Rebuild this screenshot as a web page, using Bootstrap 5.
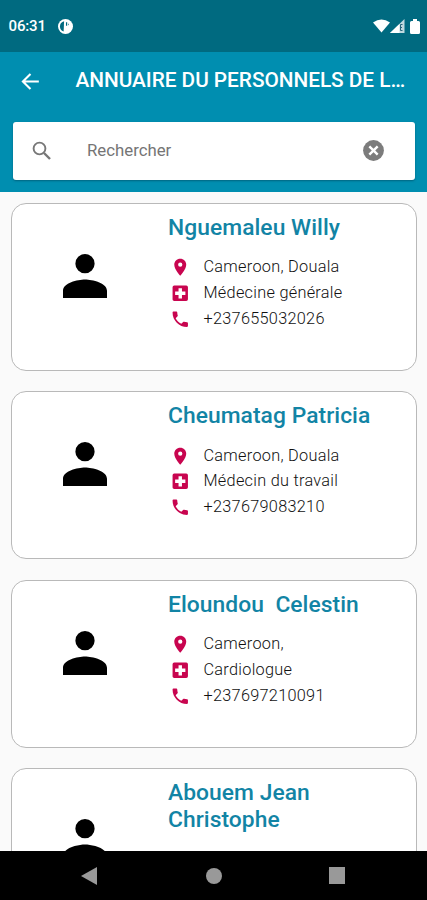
<!DOCTYPE html>
<html lang="fr">
<head>
<meta charset="utf-8">
<meta name="viewport" content="width=device-width, initial-scale=1">
<title>Annuaire du personnel</title>
<link href="https://cdn.jsdelivr.net/npm/bootstrap@5.3.0/dist/css/bootstrap.min.css" rel="stylesheet">
<style>
body{font-family:Roboto,"Liberation Sans",sans-serif;background:#fafafa;color:#222}
svg{display:block;flex:none}
.screen{height:900px}
.status{height:51.5px;background:#006a80;font-size:15px;font-weight:500;padding:1px 6px 0 8.5px}
.clock{letter-spacing:-.15px}
.appbar{height:140.5px;background:#008eb0;padding:0 12px}
.titlebar{height:58px;padding:1px 4px 0 6px}
.title{font-size:20.8px;font-weight:500;margin-left:32.5px;letter-spacing:-.03px}
.search{height:58.5px;margin-top:12px;border-radius:3px;padding:0 29px 0 17px;margin-left:1px;box-shadow:0 1px 2px rgba(0,60,80,.5)}
.search input{font-size:16.8px;color:#757575;margin-left:33px;letter-spacing:0;min-width:0}
.search input::placeholder{color:#757575;opacity:1}
.people{padding:11px 10.5px 0 11px;gap:20.4px}
.person{height:168px;border:1px solid #b9b9b9;border-radius:15px}
.avatar{width:156px;padding:39px 0 0 40px}
.name{font-size:22.8px;line-height:27px;font-weight:500;color:#1284a5;padding-top:10px;margin-bottom:13.5px;white-space:pre-wrap;letter-spacing:.06px}
.info{height:25.8px;gap:13px;padding-left:2px;font-size:16.3px;font-weight:300;letter-spacing:.28px;color:#111}
.info svg{fill:#c8054f}
.sysnav{height:49px;padding:0 82px 0 80px}
.sysnav svg{fill:#999}
</style>
<script src="https://cdn.jsdelivr.net/npm/bootstrap@5.3.0/dist/js/bootstrap.bundle.min.js"></script>
</head>
<body>
<svg class="d-none">
<symbol id="person" viewBox="0 0 24 24"><path d="M12 11a3.500 3.500 0 1 0 0-7 3.500 3.500 0 0 0 0 7zm0 2.300c-2.700 0-8 1.300-8 4.100V20h16v-2.600c0-2.800-5.300-4.100-8-4.100z"/></symbol>
<symbol id="pin" viewBox="0 0 24 24"><path d="M12 2C8.100 2 5 5.100 5 9c0 5.300 7 13 7 13s7-7.700 7-13c0-3.900-3.100-7-7-7zm0 9.500a2.500 2.500 0 1 1 0-5 2.500 2.500 0 0 1 0 5z"/></symbol>
<symbol id="cross" viewBox="0 0 24 24"><path d="M19 3H5a2 2 0 0 0-2 2v14c0 1.100.9 2 2 2h14a2 2 0 0 0 2-2V5a2 2 0 0 0-2-2zm-1 11h-4v4h-4v-4H6v-4h4V6h4v4h4v4z"/></symbol>
<symbol id="phone" viewBox="0 0 24 24"><path d="M6.620 10.790c1.440 2.830 3.760 5.140 6.590 6.590l2.200-2.200c.27-.27.67-.36 1.020-.24 1.120.37 2.330.57 3.570.57.55 0 1 .45 1 1V20c0 .55-.45 1-1 1C10.610 21 3 13.390 3 4c0-.55.45-1 1-1h3.500c.55 0 1 .45 1 1 0 1.250.2 2.450.57 3.570.11.350.030.740-.25 1.020l-2.200 2.200z"/></symbol>
</svg>
<div class="screen d-flex flex-column overflow-hidden">
  <div class="status d-flex align-items-center flex-shrink-0 text-white">
    <span class="clock me-2">06:31</span>
    <svg class="ms-1" width="15" height="15" viewBox="0 0 16 16"><circle cx="8" cy="8" r="8" fill="#fff"/><path d="M6.500 2.500a5.600 5.600 0 0 0-.5 10.800z" fill="#006a80"/><path d="M8.500 3.500h1.300v3.700H8.500zM11 4.500q1.700 1.200 0 2.500z" fill="#006a80"/></svg>
    <div class="d-flex align-items-center ms-auto">
      <svg width="17" height="14" viewBox="0 0 17 14"><path fill="#fff" d="M0 3.500Q8.500-2.500 17 3.500L8.500 13.500z"/></svg>
      <svg width="15" height="14" viewBox="0 0 15 14"><path fill="#fff" fill-opacity=".75" d="M14.500 0v14H0z"/><path fill="#fff" d="M9.500 5v9H0z"/><path d="M12.500 5.500h-2v6h2M10.500 8.500h1.500" fill="none" stroke="#28657a"/></svg>
      <svg class="ms-1" width="12" height="15" viewBox="0 0 12 15"><path fill="#fff" d="M4 0h4v2h1.500Q11 2 11 3.500v10Q11 15 9.500 15h-7Q1 15 1 13.500v-10Q1 2 2.500 2H4z"/></svg>
    </div>
  </div>
  <header class="appbar flex-shrink-0">
    <div class="titlebar d-flex align-items-center text-white">
      <svg width="25" height="25" viewBox="0 0 24 24"><path d="M20 12H5.500M12 4.700 4.700 12l7.300 7.300" fill="none" stroke="#fff" stroke-width="2"/></svg>
      <div class="title text-nowrap">ANNUAIRE DU PERSONNELS DE L…</div>
    </div>
    <div class="search bg-white d-flex align-items-center">
      <svg width="24" height="24" viewBox="0 0 24 24" fill="none" stroke="#777" stroke-width="1.900"><circle cx="9.500" cy="9.500" r="5.900"/><path d="m14 14 6 6" stroke-width="2.400"/></svg>
      <input class="border-0 p-0 flex-grow-1 bg-transparent" placeholder="Rechercher" aria-label="Rechercher">
      <svg width="25" height="25" viewBox="0 0 24 24"><circle cx="12" cy="12" r="10" fill="#7c7c7c"/><path d="m8 8 8 8m0-8-8 8" stroke="#fff" stroke-width="2.300"/></svg>
    </div>
  </header>
  <main class="people d-flex flex-column flex-grow-1 overflow-hidden"></main>
  <nav class="sysnav bg-black d-flex justify-content-between align-items-center flex-shrink-0">
    <svg width="18" height="18" viewBox="0 0 18 18"><path d="M17 0v18L1 9z"/></svg>
    <svg width="16" height="16" viewBox="0 0 16 16"><circle cx="8" cy="8" r="8"/></svg>
    <svg width="16" height="17" viewBox="0 0 16 17"><path d="M0 0h16v17H0z"/></svg>
  </nav>
</div>
<script>
const people=[
 ["Nguemaleu Willy","Cameroon, Douala","Médecine générale","+237655032026"],
 ["Cheumatag Patricia","Cameroon, Douala","Médecin du travail","+237679083210"],
 ["Eloundou  Celestin","Cameroon,","Cardiologue","+237697210091"],
 ["Abouem Jean\nChristophe"]
];
const icons=["pin","cross","phone"];
document.querySelector("main").innerHTML=people.map(([name,...info])=>`
<article class="person bg-white d-flex flex-shrink-0">
  <div class="avatar flex-shrink-0"><svg width="66" height="66"><use href="#person"/></svg></div>
  <div class="flex-grow-1"><h2 class="name">${name}</h2>${info.map((t,i)=>`<div class="info d-flex align-items-center"><svg width="20.500" height="20.500"><use href="#${icons[i]}"/></svg><span>${t}</span></div>`).join("")}</div>
</article>`).join("");
</script>
</body>
</html>
